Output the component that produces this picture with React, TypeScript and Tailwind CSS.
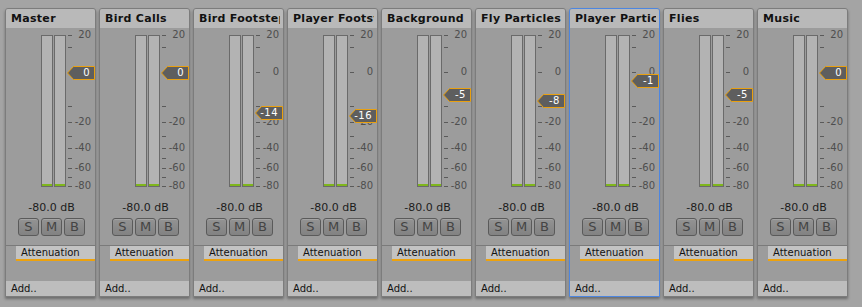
const strips = [
  { name: 'Master', value: '0', top: 31 },
  { name: 'Bird Calls', value: '0', top: 31 },
  { name: 'Bird Footsteps', value: '-14', top: 71 },
  { name: 'Player Footsteps', value: '-16', top: 74 },
  { name: 'Background', value: '-5', top: 53 },
  { name: 'Fly Particles', value: '-8', top: 59 },
  { name: 'Player Particles', value: '-1', top: 39, selected: true },
  { name: 'Flies', value: '-5', top: 53 },
  { name: 'Music', value: '0', top: 31 },
];

// tick offsets from the top of the meter bars
const ticks = [0, 12, 37, 71, 87, 101, 113, 123, 133, 142, 151];
const labels = [
  { y: 0, t: '20' },
  { y: 37, t: '0' },
  { y: 87, t: '-20' },
  { y: 113, t: '-40' },
  { y: 133, t: '-60' },
  { y: 151, t: '-80' },
];

function Bar() {
  return (
    <div className="relative w-[12px] h-[152px] border border-[#6a6a6a] bg-[#b3b3b3]">
      <div className="absolute left-0 right-0 bottom-0 h-[2px] bg-[#7fb61c]" />
    </div>
  );
}

function Badge({ value, top }: { value: string; top: number }) {
  return (
    <div className="absolute right-0 w-[28px] h-[14px]" style={{ top }}>
      <svg width="28" height="14" className="absolute inset-0">
        <polygon
          points="0.5,7 6.5,0.5 27.5,0.5 27.5,13.5 6.5,13.5"
          fill="#5e5e5e"
          stroke="#e9a010"
          strokeWidth="1"
        />
      </svg>
      <span className="absolute right-[5px] top-0 text-[10px] leading-[14px] tracking-[0.5px] text-white">{value}</span>
    </div>
  );
}

function Strip({ name, value, top, selected }: { name: string; value: string; top: number; selected?: boolean }) {
  return (
    <div
      className={
        selected
          ? 'w-[91px] h-[289px] flex flex-col border border-[#4d86e0] rounded-t-[3px] bg-[#9c9c9c] shadow-[0_2px_3px_rgba(0,0,0,0.35)]'
          : 'w-[91px] h-[289px] flex flex-col border border-[#7c7c7c] rounded-t-[3px] bg-[#9c9c9c] shadow-[0_2px_3px_rgba(0,0,0,0.35)]'
      }
    >
      <div className="h-[19px] bg-[#b9b9b9] rounded-t-[2px] pl-[5px] pr-[3px]">
        <div className="overflow-hidden whitespace-nowrap text-[11px] font-bold leading-[19px] tracking-[0.3px] text-[#111]">
          {name}
        </div>
      </div>

      <div className="mt-[7px] h-[152px] flex pl-[35px]">
        <div className="flex gap-[1px]">
          <Bar />
          <Bar />
        </div>
        <div className="relative flex-1">
          {ticks.map((y) => (
            <div key={y} className="absolute left-[2px] w-[4px] h-[1px] bg-[#5a5a5a]" style={{ top: y }} />
          ))}
          {labels.map((l) => (
            <span
              key={l.t}
              className="absolute right-[4px] h-[12px] text-[10px] leading-[12px] text-[#4e4e4e]"
              style={{ top: l.y - 6 }}
            >
              {l.t}
            </span>
          ))}
          <Badge value={value} top={top} />
        </div>
      </div>

      <div className="mt-[14px] h-[13px] pl-[2px] text-center text-[11px] leading-[13px] text-[#1c1c1c]">-80.0 dB</div>

      <div className="mt-[4px] flex justify-center gap-[2px] pl-[2px]">
        {['S', 'M', 'B'].map((b) => (
          <div
            key={b}
            className="w-[21px] h-[18px] flex items-center justify-center rounded-[3px] border border-[#5a5a5a] bg-gradient-to-b from-[#939393] to-[#828282] shadow-[inset_0_1px_0_rgba(255,255,255,0.15)] text-[13px] leading-[16px] text-[#444]"
          >
            {b}
          </div>
        ))}
      </div>

      <div className="mt-[9px] h-[1px] bg-[#7a7a7a]" />
      <div className="h-[15px] flex">
        <div className="ml-[10px] flex-1 bg-[#c3c3c3] border-b-2 border-[#eea20c] pl-[5px] text-[10px] leading-[13px] text-[#111]">
          Attenuation
        </div>
      </div>

      <div className="flex-1" />

      <div className="h-[15px] bg-[#bdbdbd] pl-[5px] text-[10px] leading-[15px] text-[#111]">Add..</div>
    </div>
  );
}

export default function App() {
  return (
    <div className="w-[862px] h-[307px] bg-[#a4a4a4] flex gap-[3px] pl-[5px] pt-[8px] font-['DejaVu_Sans',sans-serif]">
      {strips.map((s) => (
        <Strip key={s.name} {...s} />
      ))}
    </div>
  );
}
